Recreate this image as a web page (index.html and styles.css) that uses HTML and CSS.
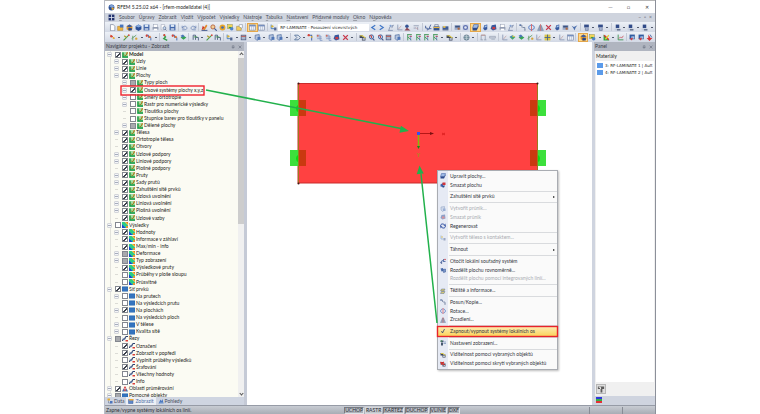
FILE: index.html
```
<!DOCTYPE html>
<html lang="cs">
<head>
<meta charset="utf-8">
<title>RFEM 5.25.02 x64</title>
<link rel="stylesheet" href="styles.css">
</head>
<body>
<svg class="sprite" aria-hidden="true">
  <symbol id="app" viewBox="0 0 12 12"><circle cx="6" cy="6" r="5" fill="#2c4f94"/><path d="M2 4l4-3 5 3-4 3z" fill="#7fa3d8"/><circle cx="8" cy="8" r="2" fill="#e6a62c"/></symbol>
  <symbol id="grid" viewBox="0 0 12 12"><rect x="1" y="1" width="10" height="10" fill="#23336f"/><path d="M6 1v10M1 6h10" stroke="#dfe5f3" stroke-width="1.4"/></symbol>
  <symbol id="new" viewBox="0 0 12 12"><path d="M2.500 1h5l2.500 3v7.500h-7.500z" fill="#fff" stroke="#67718a"/></symbol>
  <symbol id="open" viewBox="0 0 12 12"><path d="M1 4h4l1 1h4v6h-9z" fill="#f0b43c" stroke="#9a7020" stroke-width=".7"/><path d="M5 1h6v5h-6z" fill="#4674bd"/></symbol>
  <symbol id="cubeo" viewBox="0 0 12 12"><path d="M1 4l5-3 5 3v5l-5 3-5-3z" fill="#e0992f"/><path d="M1 4l5 2 5-2-5-3z" fill="#3b5ca0"/><path d="M4 7h6v4h-6z" fill="#26468a"/></symbol>
  <symbol id="cube" viewBox="0 0 12 12"><path d="M1 4l5-3 5 3v5l-5 3-5-3z" fill="#2b4f96"/><path d="M1 4l5 2 5-2-5-3z" fill="#86a9dc"/></symbol>
  <symbol id="plate" viewBox="0 0 12 12"><path d="M3 1h8l-2 6h-8z" fill="#9db9e4" stroke="#3c5da3"/><path d="M1 7h8l2-5v3l-3 6h-7z" fill="#2c4a8c"/></symbol>
  <symbol id="plater" viewBox="0 0 12 12"><path d="M1 5l5-3v8l-5-1z" fill="#3c64b0"/><path d="M5 1h6v5h-6z" fill="#d1343a"/><path d="M5 7h5l-2 4h-3z" fill="#2c4a8c"/></symbol>
  <symbol id="save" viewBox="0 0 12 12"><rect x="1" y="1" width="10" height="10" fill="#4166aa"/><rect x="3" y="1" width="6" height="4" fill="#dce8f7"/><rect x="3" y="7" width="6" height="4" fill="#aebedb"/></symbol>
  <symbol id="print" viewBox="0 0 12 12"><rect x="3" y="1" width="6" height="5" fill="#fff" stroke="#8a93a8" stroke-width=".7"/><rect x="1" y="5" width="10" height="5" rx="1" fill="#939db2"/><rect x="3" y="8" width="6" height="3" fill="#fff"/></symbol>
  <symbol id="preview" viewBox="0 0 12 12"><path d="M2 1h6v9h-6z" fill="#fff" stroke="#8a93a8" stroke-width=".8"/><circle cx="7.500" cy="7" r="2.500" fill="#c8dcf4" stroke="#5c6c8c"/><path d="M9 9l2 2" stroke="#5c6c8c" stroke-width="1.500"/></symbol>
  <symbol id="undo" viewBox="0 0 12 12"><path d="M2 3v4h4M2 7c2-5 9-4 8 1c-1 2-3 2-8 2" fill="none" stroke="#6d86b5" stroke-width="1.300"/></symbol>
  <symbol id="redo" viewBox="0 0 12 12"><path d="M10 3v4h-4M10 7c-2-5-9-4-8 1c1 2 3 2 8 2" fill="none" stroke="#6d86b5" stroke-width="1.300"/></symbol>
  <symbol id="pencil" viewBox="0 0 12 12"><path d="M3 9l6-8 2 2-5 8z" fill="#e08a2e"/><path d="M1 11l2-8 3 3z" fill="#cf3627"/><path d="M1 11h10" stroke="#374f86" stroke-width="1.500"/></symbol>
  <symbol id="glass" viewBox="0 0 12 12"><circle cx="5" cy="5" r="3.500" fill="#f1cf98" stroke="#b55f3a" stroke-width="1.500"/><path d="M7.500 7.500l4 4" stroke="#40588b" stroke-width="2"/></symbol>
  <symbol id="glassb" viewBox="0 0 12 12"><circle cx="6" cy="5" r="3.500" fill="#c6d9f3" stroke="#47659f" stroke-width="1.700"/><path d="M2 3h4v4" stroke="#c3443f" stroke-width="1.600" fill="none"/><path d="M8 8l3 3" stroke="#40588b" stroke-width="2"/></symbol>
  <symbol id="gear" viewBox="0 0 12 12"><circle cx="6" cy="6" r="5" fill="#e8a62a"/><circle cx="6" cy="6" r="2.300" fill="#466bb1"/></symbol>
  <symbol id="gearb" viewBox="0 0 12 12"><rect x="1" y="1" width="10" height="10" fill="#c4cce2"/><circle cx="6" cy="6" r="3.300" fill="#dfe6f4" stroke="#5f70ae" stroke-width="2"/></symbol>
  <symbol id="shapes" viewBox="0 0 12 12"><rect x="1" y="1" width="8" height="7" fill="#f3d656" stroke="#807a38" stroke-width=".7"/><circle cx="8" cy="8" r="3" fill="#4f83c9"/><path d="M3 6h4" stroke="#3f9e46" stroke-width="2"/></symbol>
  <symbol id="note" viewBox="0 0 12 12"><path d="M1 4h8v7h-8z" fill="#f2cd60" stroke="#8a7430" stroke-width=".7"/><path d="M5 4l1-3h5v5l-2 1z" fill="#fff" stroke="#66728d" stroke-width=".8"/></symbol>
  <symbol id="table" viewBox="0 0 12 12"><rect x="1" y="1.500" width="10" height="9" fill="#f2f5fb" stroke="#707f9f"/><path d="M1 3h10" stroke="#5e7db6" stroke-width="2"/><path d="M4.500 3v8M8 3v8" stroke="#9aa8c2"/></symbol>
  <symbol id="tag" viewBox="0 0 12 12"><path d="M2 1v7h5" stroke="#3e78b7" stroke-width="1.500" fill="none"/><circle cx="4" cy="4" r="2" fill="#d4b33c"/><path d="M7 6h4v5h-4z" fill="#526690"/></symbol>
  <symbol id="left" viewBox="0 0 12 12"><path d="M9 2l-6 4 6 4" fill="none" stroke="#3d74c6" stroke-width="2"/></symbol>
  <symbol id="right" viewBox="0 0 12 12"><path d="M3 2l6 4-6 4" fill="none" stroke="#3d74c6" stroke-width="2"/></symbol>
  <symbol id="load" viewBox="0 0 12 12"><path d="M2 11h8M3 11l2-6 6-3-3 5" fill="none" stroke="#7a89a9" stroke-width="1.300"/><circle cx="6" cy="3" r="1.700" fill="#85a2d2"/></symbol>
  <symbol id="axis" viewBox="0 0 12 12"><path d="M3 1v9h8" fill="none" stroke="#8190ad" stroke-width="1.300"/><path d="M4 9l5-6" stroke="#b68e8e"/></symbol>
  <symbol id="person" viewBox="0 0 12 12"><circle cx="5" cy="4" r="3" fill="#345494"/><path d="M1 11l4-5 6 5z" fill="#8b4755"/></symbol>
  <symbol id="xx" viewBox="0 0 12 12"><path d="M1 3h9M1 7h4M8 5v5" stroke="#929db4" stroke-width="1.500"/><path d="M5 6l3 3" stroke="#c57777"/></symbol>
  <symbol id="calc" viewBox="0 0 12 12"><path d="M1 3v4h3v4M6 10l4-9M6 8h5" fill="none" stroke="#455e97" stroke-width="1.500"/></symbol>
  <symbol id="bag" viewBox="0 0 12 12"><rect x="1" y="4" width="10" height="7" fill="#34538f"/><path d="M3 4v-3h6v3" fill="none" stroke="#66728a"/><path d="M1 6h10" stroke="#e6b443" stroke-width="2"/></symbol>
  <symbol id="bed" viewBox="0 0 12 12"><rect x="1" y="4" width="10" height="5" fill="#3d5b96"/><path d="M2 5h4" stroke="#efc650" stroke-width="3"/><path d="M1 10h10" stroke="#273a69" stroke-width="1.500"/></symbol>
  <symbol id="view" viewBox="0 0 12 12"><rect x="1" y="2" width="10" height="8" fill="#9aaac9"/><path d="M2 3h8v3h-8z" fill="#3c5380"/><circle cx="8" cy="8" r="2" fill="#b06b43"/></symbol>
  <symbol id="cyl" viewBox="0 0 12 12"><path d="M4 2l5-1v8l-4 2-3-3z" fill="#36589e"/><path d="M5 3l3-1v3l-4 1z" fill="#a6c5ed"/></symbol>
  <symbol id="cylr" viewBox="0 0 12 12"><path d="M3 2l7-1 1 8-6 2-4-3z" fill="#36589e"/><path d="M4 5h5v4h-5z" fill="#cd3c43"/></symbol>
  <symbol id="move" viewBox="0 0 12 12"><path d="M1 2h4v4M6 6h4v5" fill="none" stroke="#697a98" stroke-width="1.400"/><circle cx="2" cy="2" r="1.400" fill="#4c69a2"/><circle cx="10" cy="10" r="1.600" fill="#9aa5b9"/></symbol>
  <symbol id="rotate" viewBox="0 0 12 12"><path d="M5 2c-5 1-5 7 0 8M7 2c5 1 5 7 0 8" fill="none" stroke="#4b76c4" stroke-width="1.600"/><path d="M6 0v12" stroke="#d8484a" stroke-width="1.300"/></symbol>
  <symbol id="mirror" viewBox="0 0 12 12"><path d="M1 11l4-9v9zM11 11l-4-9v9z" fill="#9dabc7" stroke="#566786" stroke-width=".7"/><path d="M6 0v12" stroke="#cb4b4b"/></symbol>
  <symbol id="cut" viewBox="0 0 12 12"><path d="M2 2l8 8M10 2l-8 8" stroke="#c7374a" stroke-width="2.200"/></symbol>
  <symbol id="wing" viewBox="0 0 12 12"><path d="M1 3l4 2 6-3-3 4-2 5-2-4z" fill="#4a6dac"/></symbol>
  <symbol id="split" viewBox="0 0 12 12"><path d="M1 3l5-1 1 6-4 1z" fill="#4a6dac"/><path d="M6 5l5-1v6l-4 1z" fill="#7a97cb" stroke="#30508f"/></symbol>
  <symbol id="stack" viewBox="0 0 12 12"><rect x="2" y="1" width="8" height="5" fill="#344d89"/><path d="M4 6v5h5v-4" fill="#a5b3d1" stroke="#5f6d8d"/></symbol>
  <symbol id="layer" viewBox="0 0 12 12"><rect x="3" y="1" width="6" height="6" fill="#314b89"/><path d="M1 8h10v3h-10z" fill="#c3cddf"/><path d="M5 10h6" stroke="#4b5977" stroke-width="2"/></symbol>
  <symbol id="node" viewBox="0 0 12 12"><path d="M2 2l3 1 4 5" stroke="#d96c43" stroke-width="1.500" fill="none"/><circle cx="4" cy="4" r="2" fill="#d84333"/><circle cx="8" cy="7" r="1.700" fill="#e2ad38"/></symbol>
  <symbol id="line" viewBox="0 0 12 12"><path d="M1 11l9-9" stroke="#4c9d49" stroke-width="1.800"/><path d="M2 3l4 3" stroke="#b59b31" stroke-width="2"/><circle cx="10" cy="2" r="1.500" fill="#d64a3d"/></symbol>
  <symbol id="member" viewBox="0 0 12 12"><path d="M1 8l8-6M3 11v-8" stroke="#5b9b61" stroke-width="1.400"/><circle cx="9" cy="8" r="2" fill="#d7a63b"/></symbol>
  <symbol id="joint" viewBox="0 0 12 12"><path d="M2 2h4v4h4v5" stroke="#496baa" stroke-width="1.600" fill="none"/><circle cx="3" cy="3" r="2" fill="#d64439"/><circle cx="8" cy="5" r="2" fill="#dc7337"/></symbol>
  <symbol id="lcs" viewBox="0 0 12 12"><path d="M1 10l3-5 3 2M7 2v5h4" stroke="#3b5a9c" stroke-width="1.600" fill="none"/><circle cx="3" cy="10" r="1.500" fill="#2e4680"/><circle cx="10" cy="3" r="1.600" fill="#c74349"/></symbol>
  <symbol id="support" viewBox="0 0 12 12"><path d="M3 1l3 4-3 3 6 3" stroke="#319e45" stroke-width="2.300" fill="none"/><circle cx="4" cy="2" r="1.800" fill="#d74236"/></symbol>
  <symbol id="solid" viewBox="0 0 12 12"><path d="M1 6l5-3 5 3-5 4z" fill="#36a453"/><path d="M1 3l4-2 3 3-4 2z" fill="#4b75b7"/></symbol>
  <symbol id="section" viewBox="0 0 12 12"><path d="M2 10v-8h4v8M7 6h4v5" stroke="#4c5d80" stroke-width="1.500" fill="none"/><path d="M3 5h6" stroke="#479d4b" stroke-width="1.500"/></symbol>
  <symbol id="box" viewBox="0 0 12 12"><rect x="2" y="2" width="8" height="8" fill="#aab5ca" stroke="#4d5e84" stroke-width="1.300"/><path d="M2 4h8" stroke="#c24a3b" stroke-width="1.400"/></symbol>
  <symbol id="boxes" viewBox="0 0 12 12"><path d="M2 2l7-1v7l-4 3-3-3z" fill="#b6c5df" stroke="#365893"/><path d="M6 5h5v5h-5z" fill="#4f76b7"/></symbol>
  <symbol id="hinge" viewBox="0 0 12 12"><path d="M1 2h6l4 4-4 4h-6l4-4z" fill="none" stroke="#56729a" stroke-width="1.500"/></symbol>
  <symbol id="redcorner" viewBox="0 0 12 12"><path d="M2 2h6v9" fill="none" stroke="#4b6cae" stroke-width="1.800"/><circle cx="3" cy="2" r="2" fill="#d74338"/><circle cx="8" cy="5" r="1.500" fill="#daaf35"/></symbol>
  <symbol id="meshp" viewBox="0 0 12 12"><path d="M1 2h6v9h4M1 5h9M2 8h8" stroke="#7791c0" stroke-width="1.200" fill="none"/><circle cx="3" cy="3" r="1.600" fill="#d26d5c"/></symbol>
  <symbol id="axes" viewBox="0 0 12 12"><path d="M2 1h8M3 1v10M3 5l6 5" stroke="#3b9450" stroke-width="1.500"/><path d="M6 4h4" stroke="#d3484c" stroke-width="1.800"/><path d="M8 3v8" stroke="#4568b5"/></symbol>
  <symbol id="faint" viewBox="0 0 12 12"><path d="M2 10v-8h7v8M1 10h4M7 10h4" stroke="#8f9bad" stroke-width="1.300" fill="none"/><path d="M2 2h7" stroke="#c47b6d"/></symbol>
  <symbol id="beam" viewBox="0 0 12 12"><path d="M1 4h10v3h-10z" fill="#cdd3de" stroke="#8f9bad"/><path d="M4 9h6" stroke="#8f9bad"/></symbol>
  <symbol id="globe" viewBox="0 0 12 12"><circle cx="6" cy="6" r="4.500" fill="#7d9aa6" stroke="#475f78"/><path d="M2 4h8M2 8h8M6 1v10" stroke="#d5e0e6" stroke-width=".8"/></symbol>
  <symbol id="gem" viewBox="0 0 12 12"><path d="M1 5l5-3 5 3-5 5z" fill="#48a66b"/><path d="M1 5l5-3v4z" fill="#4b84c7"/><path d="M6 2l5 3h-5z" fill="#dfca46"/></symbol>
  <symbol id="tiles" viewBox="0 0 12 12"><rect x="1" y="1" width="10" height="10" fill="#d9c54b"/><path d="M6 1v10M1 6h10" stroke="#46628c" stroke-width="1.500"/></symbol>
  <symbol id="rainx" viewBox="0 0 12 12"><path d="M1 1v10h10z" fill="#36a748"/><path d="M2 2l8 8" stroke="#d33a33" stroke-width="2.500"/><path d="M10 2l-6 7" stroke="#e4cf30" stroke-width="2.300"/></symbol>
  <symbol id="chart" viewBox="0 0 12 12"><path d="M2 1v9h9" fill="none" stroke="#3b9450" stroke-width="1.500"/><path d="M3 8l3-3 2 2 3-4" fill="none" stroke="#c95257" stroke-width="1.300"/></symbol>
  <symbol id="bluered" viewBox="0 0 12 12"><rect x="1" y="1" width="9" height="8" fill="#315b9f"/><path d="M4 4h5v4h-5z" fill="#a5c5ec"/><path d="M1 8l4 3 2-5" fill="#cd3d42"/></symbol>
  <symbol id="redarrow" viewBox="0 0 12 12"><path d="M4 1v6h-3l5 5 5-5h-3z" fill="#d23337"/><path d="M7 1l3 5" stroke="#3d62a7" stroke-width="1.500"/></symbol>
  <symbol id="pin" viewBox="0 0 12 12"><path d="M4 2h5v5h-5zM2 7h9M6 7v5" fill="none" stroke="#63697a" stroke-width="1.200"/></symbol>
  <symbol id="cross" viewBox="0 0 12 12"><path d="M2 2l8 8M10 2l-8 8" stroke="#595f70" stroke-width="1.500"/></symbol>
  <symbol id="model" viewBox="0 0 12 12"><rect width="12" height="12" fill="#a6e0a5"/><path d="M2 1v9h10" fill="none" stroke="#159846" stroke-width="2.800"/><path d="M4 5l3 3 4-7" fill="none" stroke="#8e7a14" stroke-width="2"/><circle cx="10" cy="2" r="1.500" fill="#e0712d"/></symbol>
  <symbol id="result" viewBox="0 0 12 12"><rect width="12" height="12" fill="#1a9ce8"/><path d="M0 0h4l8 8v4h-4l-8-8z" fill="#2fd07c"/><path d="M5 0h7v7z" fill="#f1dc30"/><path d="M8 0h4v4z" fill="#ee6b2e"/><path d="M0 5l7 7h-7z" fill="#1745ca"/><path d="M8 8h4v4h-4z" fill="#e39334"/></symbol>
  <symbol id="mesh" viewBox="0 0 12 12"><rect x="0" y="1" width="12" height="10" fill="#2868b4"/><path d="M4 1v10M8 1v10M0 4.500h12M0 8h12" stroke="#4b8bd1" stroke-width=".7"/></symbol>
  <symbol id="cuts" viewBox="0 0 12 12"><path d="M1 10c1-6 2-3 4-4s0-4 4-5h3" fill="none" stroke="#2c4270" stroke-width="2.400"/><path d="M1 4l5 4" stroke="#7393c5" stroke-width="1.500"/><path d="M7 8h5v3h-5z" fill="#db4038"/></symbol>
  <symbol id="avg" viewBox="0 0 12 12"><path d="M6 0l3 5h-6z" fill="#d53e43"/><path d="M3 5l3 6h-6zM9 5l3 6h-6z" fill="#456aa6"/><circle cx="6" cy="8" r="2" fill="#bf3743"/></symbol>
  <symbol id="data" viewBox="0 0 12 12"><path d="M1 1h5v4h-5z" fill="#e5ad34"/><path d="M3 5v5h4" stroke="#596a8c" fill="none"/><path d="M6 6h5v5h-5z" fill="#4c75bc"/></symbol>
  <symbol id="show" viewBox="0 0 12 12"><path d="M1 3h9v8h-9z" fill="#5d87cb" stroke="#3a5c98"/><path d="M2 2h9v3h-9z" fill="#e9a93a"/></symbol>
  <symbol id="views" viewBox="0 0 12 12"><path d="M1 11l4-8 2 3 2-4 2 9z" fill="#4b78bf"/><path d="M3 10h7" stroke="#c7dcf4"/></symbol>
  <symbol id="regen" viewBox="0 0 12 12"><path d="M2 8c-3-6 4-8 7-4M10 4c3 6-4 8-7 4" fill="none" stroke="#2c4da0" stroke-width="2"/><path d="M7 5h4v-4zM5 7h-4v4z" fill="#2c4da0"/></symbol>
  <symbol id="check" viewBox="0 0 12 12"><path d="M3 6l2 4 4-8" fill="none" stroke="#24356d" stroke-width="1.500"/></symbol>
  <symbol id="vis" viewBox="0 0 12 12"><path d="M1 2h5v3h5v6h-6v-4h-4z" fill="#3c455b"/><path d="M2 3h4l5 4" fill="none" stroke="#dac643" stroke-width="2"/><path d="M6 7h4v3h-4z" fill="#b8c2d1"/></symbol>
  <symbol id="visr" viewBox="0 0 12 12"><path d="M1 2h5v3h5v6h-6v-4h-4z" fill="#3c455b"/><path d="M1 2l8 6M8 2l-6 5" stroke="#e0322e" stroke-width="2.200"/><path d="M7 8h3v2h-3z" fill="#b8c2d1"/></symbol>
  <symbol id="settings" viewBox="0 0 12 12"><path d="M1 1h6v3h-6zM2 5h4v6h-4z" fill="#46566e"/><path d="M7 4h5M7 7h5" stroke="#7892ba" stroke-width="1.500"/><circle cx="3" cy="2" r="1.500" fill="#4a9b57"/></symbol>
  <symbol id="centroid" viewBox="0 0 12 12"><path d="M3 2h7l-2 4h-7zM3 7h7l-2 4h-7z" fill="#d5c873" stroke="#566a91" stroke-width=".9"/></symbol>
</svg>

<main class="window">
  <header class="titlebar">
    <svg class="icon"><use href="#app"/></svg>
    <h1>RFEM 5.25.02 x64 - [rfem-modelldatei (4)]</h1>
    <div class="window-buttons"><button aria-label="Minimalizovat">─</button><button aria-label="Maximalizovat">□</button><button aria-label="Zavřít">✕</button></div>
  </header>
  <nav class="menubar">
    <svg class="icon"><use href="#grid"/></svg>
    <a href="#"><u>S</u>oubor</a><a href="#">Ú<u>p</u>ravy</a><a href="#"><u>Z</u>obrazit</a><a href="#">V<u>l</u>ožit</a><a href="#">V<u>ý</u>počet</a><a href="#">Výsledk<u>y</u></a><a href="#">Nás<u>t</u>roje</a><a href="#"><u>T</u>abulka</a><a href="#"><u>N</u>astavení</a><a href="#">Pří<u>d</u>avné moduly</a><a href="#"><u>O</u>kno</a><a href="#">N<u>á</u>pověda</a>
    <div class="document-buttons"><button aria-label="Minimalizovat okno">–</button><button aria-label="Obnovit okno">▫</button><button aria-label="Zavřít okno">×</button></div>
  </nav>
  <div class="toolbar" id="toolbar-main"></div>
  <div class="toolbar" id="toolbar-edit"></div>

  <div class="workspace">
    <aside class="navigator">
      <div class="panel-head"><h2>Navigátor projektu - Zobrazit</h2><svg class="small-icon"><use href="#pin"/></svg><svg class="small-icon"><use href="#cross"/></svg></div>
      <div class="tree-frame">
        <ul class="tree" id="tree"></ul>
        <div class="scrollbar"><i class="up"></i><i class="thumb"></i><i class="rest"></i><i class="down"></i></div>
      </div>
      <div class="tabs"><button><svg class="icon"><use href="#data"/></svg>Data</button><button class="active"><svg class="icon"><use href="#show"/></svg>Zobrazit</button><button><svg class="icon"><use href="#views"/></svg>Pohledy</button></div>
    </aside>

    <section class="canvas">
      <svg class="drawing" width="345" height="363">
        <rect x="51" y="41" width="240" height="100" fill="#ff4141"/>
        <path d="M51 141.500v-100h240M51 141h140" fill="none" stroke="#c92c2c"/>
        <path d="M51.500 42v99M290.500 42v99" stroke="#9a7a20"/>
        <g fill="#3ce03c"><rect x="43" y="58" width="16" height="16"/><rect x="43" y="108" width="16" height="16"/><rect x="283" y="58" width="16" height="16"/><rect x="283" y="108" width="16" height="16"/></g>
        <g fill="#ca3910"><rect x="51" y="58" width="8" height="16"/><rect x="51" y="108" width="8" height="16"/><rect x="283" y="58" width="8" height="16"/><rect x="283" y="108" width="8" height="16"/></g>
        <g fill="#0bdc12"><path d="M51 63a4 4 0 0 0 0 7zM51 113a4 4 0 0 0 0 7zM291 63a4 4 0 0 1 0 7zM291 113a4 4 0 0 1 0 7z"/></g>
        <path d="M51.500 58v16M51.500 108v16M290.500 58v16M290.500 108v16" stroke="#93801d"/>
        <g fill="#401414"><circle cx="51.500" cy="41.500" r="1"/><circle cx="51.500" cy="141.500" r="1"/><circle cx="290.500" cy="41.500" r="1"/></g>
        <path d="M171 91.500h13" stroke="#b51616"/><path d="M183 90l4 1.500-4 1.500z" fill="#7c1010"/><path d="M195 91l3 2M198 91l-3 2" stroke="#d71919" stroke-width=".8"/>
        <path d="M171.500 92v12" stroke="#85b90b" stroke-width="1.500"/><path d="M170 104h3l-1.500 3z" fill="#168b16"/><path d="M170 111l1.500 2 1.500-2M171.500 113v2" fill="none" stroke="#a5901d" stroke-width=".8"/>
        <rect x="170" y="90" width="3" height="3" fill="#354ef0"/>
      </svg>
      <div class="context-menu" id="context-menu"></div>
    </section>

    <aside class="panel">
      <div class="panel-head"><h2>Panel</h2><svg class="small-icon"><use href="#pin"/></svg><svg class="small-icon"><use href="#cross"/></svg></div>
      <div class="panel-body">
        <h3>Materiály</h3>
        <ul class="materials"><li>3: RF-LAMINATE 1 | Auft</li><li>4: RF-LAMINATE 2 | Auft</li></ul>
        <button class="panel-tool" aria-label="Filtr"><svg width="9" height="9" viewBox="0 0 9 9"><path d="M1 1h7v3h-2v4h-2v-4h-3z" fill="#5d5c5b"/><path d="M2 2h2v2" stroke="#fff" fill="none"/></svg></button>
      </div>
      <div class="panel-tab"><i></i></div>
    </aside>
  </div>

  <footer class="status"><p>Zapne/vypne systémy lokálních os linií.</p><div class="modes"><button>UCHOP</button><button class="raised">RASTR</button><button>KARTEZ</button><button>DUCHOP</button><button>VLINIE</button><button>DXF</button></div><i></i><i></i></footer>

  <svg class="annotations" width="552" height="414" aria-hidden="true">
    <rect x="17" y="86" width="83" height="9" fill="none" stroke="#f0232e" stroke-width="1.400"/>
    <path d="M102 90l195 38.500M333 323l-16-149" stroke="#22b14c" stroke-width="1.500"/>
    <path d="M305 131l-9.500 1.800 1.400-7zM315.500 165.500l4.200 8-7 .8z" fill="#22b14c"/>
    <rect x="333.500" y="326.500" width="120" height="10" fill="none" stroke="#e8232b" stroke-width="1.400"/>
  </svg>
</main>
<script src="app.js"></script>
</body>
</html>
```
FILE: styles.css
```
* { box-sizing: border-box; }
body { margin: 0; padding: 0 104px; background: #fff; color: #1c1d21; font: 5px/7px Lato, "Open Sans", sans-serif; overflow: hidden; }
h1, h2, h3, p, ul { margin: 0; padding: 0; font: inherit; list-style: none; }
button { margin: 0; padding: 0; border: 0; background: none; color: inherit; font: inherit; }
a { color: inherit; text-decoration: none; }
u { text-decoration: underline; text-decoration-color: #9da1aa; text-decoration-thickness: 1px; }
.sprite { display: none; }
.icon { flex: none; width: 7px; height: 7px; }
.small-icon { flex: none; width: 4px; height: 4px; }
.window { position: relative; display: flex; flex-direction: column; height: 100vh; border-right: 1px solid #8c909a; border-left: 1px solid #b9bdc8; background: #d2d7e1; }

.titlebar { display: flex; align-items: center; gap: 2px; height: 13px; padding: 0 3px; border-top: 1px solid #b5b5b5; background: #fff; }
.window-buttons { display: flex; gap: 13px; margin-left: auto; padding-right: 3px; color: #333; }
.window-buttons button { width: 5px; }
.menubar { display: flex; align-items: center; gap: 4px; height: 9px; padding: 0 3px; background: #cfd4de; color: #4a4e58; }
.document-buttons { display: flex; gap: 3px; margin-left: auto; color: #5e6370; }

.toolbar { display: flex; align-items: center; height: 10px; padding: 0 1px 0 3px; background: linear-gradient(#edf1f7, #d3d9e5); }
.tool { display: flex; flex: 87 1 0; align-items: center; justify-content: center; height: 9px; }
.tool.on { border: 1px solid #e5a74a; background: #ffd98c; }
.gap { flex: 34 1 0; height: 8px; background: linear-gradient(90deg, transparent 1px, #c3c9d5 1px 2px, transparent 2px); }
.more { flex: 52 1 0; }
.more::before { content: ""; display: block; width: 2px; height: 1px; margin: auto; background: #535b6e; }
.load-case { flex: 880 1 0; min-width: 0; height: 7px; padding: 0 2px; border: 0; background: #fff; color: #1c1d21; font: 4px/7px "DejaVu Sans", sans-serif; appearance: none; }

.workspace { display: flex; flex: 1; min-height: 0; }
.panel-head { display: flex; flex: none; align-items: center; gap: 3px; height: 9px; padding: 0 2px 0 1px; background: #b0b5c0; color: #3a3d47; }
.panel-head h2 { flex: 1; }
.navigator { display: flex; flex: none; flex-direction: column; width: 142px; padding-right: 3px; background: #c5cad6; }
.tree-frame { display: flex; flex: 1; min-height: 0; overflow: hidden; background: #fbfbf3; }
.tree { display: flex; flex: 1; flex-direction: column; height: 348px; }
.tree li { display: flex; flex: 1; align-items: center; min-height: 0; padding-left: 2px; white-space: nowrap; background: linear-gradient(90deg, transparent 5px, #e2e2dc 5px 6px, transparent 6px); }
.tree .level-1 { padding-left: 9px; }
.tree .level-2 { padding-left: 17px; }
.tree .bold { font-weight: 700; }
.tree .icon { width: 6px; height: 6px; margin: 0 1px; }
.expander { position: relative; flex: none; width: 5px; height: 5px; margin-right: 3px; border: 1px solid #d3d5da; border-radius: 1px; background: #f5f6f8; }
.expander::before { content: ""; position: absolute; top: 1px; left: 0; width: 3px; height: 1px; background: #a4abbb; }
.expander.leaf { border-color: transparent; background: none; }
.expander.leaf::before { background: #dcdcd6; }
.tree input { flex: none; width: 6px; height: 6px; margin: 0; border: 1px solid #83878f; background: #fff; appearance: none; }
.tree input:checked { background: linear-gradient(135deg, #fff 40%, #3c424c 40% 70%, #fff 70%); }
.tree input.mixed { background: #a7a9ad; }
.scrollbar { display: flex; flex: none; flex-direction: column; align-items: center; width: 6px; background: #f0f0f0; }
.up, .down { width: 3px; height: 3px; margin: 2px 0; border: solid #555; border-width: 1px 0 0 1px; transform: rotate(45deg); }
.down { transform: rotate(225deg); }
.thumb { flex: 1; width: 6px; background: #cdcdcd; }
.rest { flex: 1; }
.tabs { display: flex; height: 8px; color: #454b5a; background: #cfd5e1; }
.tabs button { display: flex; align-items: center; gap: 1px; padding: 0 2px; }
.tabs .active { background: #edf0f5; color: #4a6ea6; }
.tabs .icon { width: 6px; height: 6px; }

.canvas { position: relative; flex: 1; min-width: 0; background: #fff; }
.drawing { position: absolute; top: 0; left: 0; }
.context-menu { position: absolute; top: 128px; left: 190px; display: flex; flex-direction: column; width: 121px; height: 200px; padding: 1px 0; border: 1px solid #a9acb2; background: linear-gradient(90deg, #e6eaf4 10px, #fafafa 10px); box-shadow: 1px 1px 2px #0004; color: #33363e; z-index: 1; }
.context-menu button { display: flex; flex: 9; align-items: center; gap: 4px; min-height: 0; padding: 0 2px; text-align: left; white-space: nowrap; }
.context-menu .icon { width: 6px; height: 6px; }
.context-menu span { flex: 1; }
.context-menu .disabled { color: #a8abb1; }
.context-menu .disabled .icon { opacity: .5; }
.context-menu .submenu::after { content: ""; border: solid transparent; border-width: 1px 0 1px 2px; border-left-color: #222; }
.context-menu .selected { background: linear-gradient(#fdebb0, #fbd35c); }
.context-menu hr { flex: 3; min-height: 0; width: 108px; margin: 0 0 0 auto; border: 0; background: linear-gradient(transparent 1px, #d9dbde 1px 2px, transparent 2px); }

.panel { display: flex; flex: none; flex-direction: column; width: 63px; padding-left: 2px; background: #cfd4df; }
.panel-body { display: flex; flex: 1; flex-direction: column; margin-left: 1px; background: #f0f0f0; }
.panel-body h3 { padding: 2px 1px 1px; }
.materials { flex: 1; margin: 0 1px 2px; padding: 1px; background: #fff; font: 4px/7px "DejaVu Sans", sans-serif; white-space: nowrap; }
.materials li { display: flex; align-items: center; gap: 2px; }
.materials li::before { content: ""; flex: none; width: 6px; height: 5px; background: #5b9bea; }
.panel-tool { display: flex; align-items: center; justify-content: center; width: 10px; height: 10px; margin: 0 1px 2px; border: 1px solid #b7b7b7; background: #dedede; }
.panel-tab { height: 9px; padding: 1px 2px; }
.panel-tab i { display: block; width: 6px; height: 6px; background: linear-gradient(#3038d8 33%, #2fb444 33% 66%, #e52f35 66%); }

.status { display: flex; align-items: center; height: 9px; padding-left: 1px; border-top: 1px solid #969ba6; background: linear-gradient(#c8ccd3, #a9adb5); color: #2c2f36; }
.status p { flex: 239; }
.modes { display: flex; flex: 246; gap: 1px; }
.modes button { height: 7px; border: 1px solid #777b83; border-right-color: #e0e2e6; border-bottom-color: #e0e2e6; line-height: 5px; }
.modes .raised { border-color: #d5d7db; background: #c5c8ce; }
.status i { flex: 32; height: 7px; border-left: 1px solid #888c95; }
.annotations { position: absolute; top: 0; left: -1px; z-index: 2; pointer-events: none; }
```
FILE: app.js
```
const icon = (id) => `<svg class="icon"><use href="#${id}"/></svg>`;

// "|" is a separator, "." a drop-down marker, "*" before a name a pressed tool.
const toolbars = {
  'toolbar-main': 'new open cubeo cube save print preview save | undo redo | pencil glass gear shapes note | *table table | tag CASE left right load axis person xx | calc bag bed | view gearb *plate cyl cylr print load | move rotate mirror cut cyl view wing | stack . stack . | layer . layer . layer .',
  'toolbar-edit': 'node . line member . joint . | support joint solid | section . line section | tag . box . boxes . boxes boxes . | hinge . redcorner meshp meshp cylr cut . | vis glassb glassb box boxes | axes axes axes axes . vis . | globe . | faint beam | axis gem solid member axis tiles . axis table | *cubeo shapes . rainx . chart | bluered bluered redarrow',
};
for (const [id, list] of Object.entries(toolbars)) {
  document.getElementById(id).innerHTML = list.split(' ').map((t) => {
    if (t === '|') return '<i class="gap"></i>';
    if (t === '.') return '<i class="more"></i>';
    if (t === 'CASE') return '<select class="load-case" aria-label="Zatěžovací stav"><option>RF-LAMINATE - Posouzení vícevrstvých</option></select>';
    const on = t[0] === '*';
    const name = on ? t.slice(1) : t;
    return `<button class="tool${on ? ' on' : ''}" aria-label="${name}">${icon(name)}</button>`;
  }).join('');
}

// level, expander (- + or leaf .), state (x checked, o empty, m mixed), icon, label
const rows = `0-x model Model
1+x model Uzly
1+x model Linie
1-x model Plochy
2+m model Typy ploch
2+x model Osové systémy plochy x,y,z
2+o model Směry ortotropie
2+o model Rastr pro numerické výsledky
2.o model Tloušťka plochy
2.o model Stupnice barev pro tloušťky v panelu
2+m model Dělené plochy
1+x model Tělesa
1.x model Ortotropie tělesa
1.x model Otvory
1+x model Uzlové podpory
1+x model Liniové podpory
1.x model Plošné podpory
1+x model Pruty
1+x model Sady prutů
1.x model Zahuštění sítě prvků
1+x model Uzlová uvolnění
1+x model Liniová uvolnění
1+x model Plošná uvolnění
1.x model Uzlové vazby
0-o result Výsledky
1+x result Hodnoty
1.x result Informace v záhlaví
1.x result Max/min - info
1+m result Deformace
1+m result Typ zobrazení
1.x result Výsledkové pruty
1.o result Průběhy v ploše sloupu
1.o result Průsvitné
0-x mesh Síť prvků
1+o mesh Na prutech
1.o mesh Na výsledcích prutu
1+x mesh Na plochách
1.o mesh Na výsledcích ploch
1+o mesh V tělese
1+o mesh Kvalita sítě
0-m cuts Řezy
1.x cuts Označení
1.x cuts Zobrazit v popředí
1.o cuts Vyplnit průběhy výsledků
1.x cuts Šrafování
1.o cuts Všechny hodnoty
1.o cuts Info
0+x avg Oblasti průměrování
0+m mesh Pomocné objekty`.split('\n');
document.getElementById('tree').innerHTML = rows.map((row, i) => {
  const [, level, exp, state, name, label] = row.match(/^(\d)(.)(.) (\w+) (.*)$/);
  const box = `<input type="checkbox" id="t${i}"${state === 'x' ? ' checked' : ''}${state === 'm' ? ' class="mixed"' : ''}>`;
  return `<li class="level-${level}${i ? '' : ' bold'}"><i class="expander${exp === '.' ? ' leaf' : ''}"></i>${box}${icon(name)}<label for="t${i}">${label}</label></li>`;
}).join('');

// icon | label | state
const menu = `plate|Upravit plochy...
plater|Smazat plochu
-
|Zahuštění sítě prvků|submenu
-
boxes|Vytvořit průnik...|disabled
cylr|Smazat průnik|disabled
regen|Regenerovat
-
tag|Vytvořit těleso s kontaktem...|disabled
-
|Táhnout|submenu
-
lcs|Otočit lokální souřadný systém
split|Rozdělit plochu rovnoměrně...
|Rozdělit plochu pomocí integrovaných linií...|disabled
-
centroid|Těžiště a informace...
-
move|Posun/Kopie...
rotate|Rotace...
mirror|Zrcadlení...
-
check|Zapnout/vypnout systémy lokálních os|selected
-
settings|Nastavení zobrazení...
-
vis|Viditelnost pomocí vybraných objektů
visr|Viditelnost pomocí skrytí vybraných objektů`.split('\n');
document.getElementById('context-menu').innerHTML = menu.map((line) => {
  if (line === '-') return '<hr>';
  const [name, label, kind = ''] = line.split('|');
  return `<button class="${kind}">${name ? icon(name) : '<svg class="icon"></svg>'}<span>${label}</span></button>`;
}).join('');
```
